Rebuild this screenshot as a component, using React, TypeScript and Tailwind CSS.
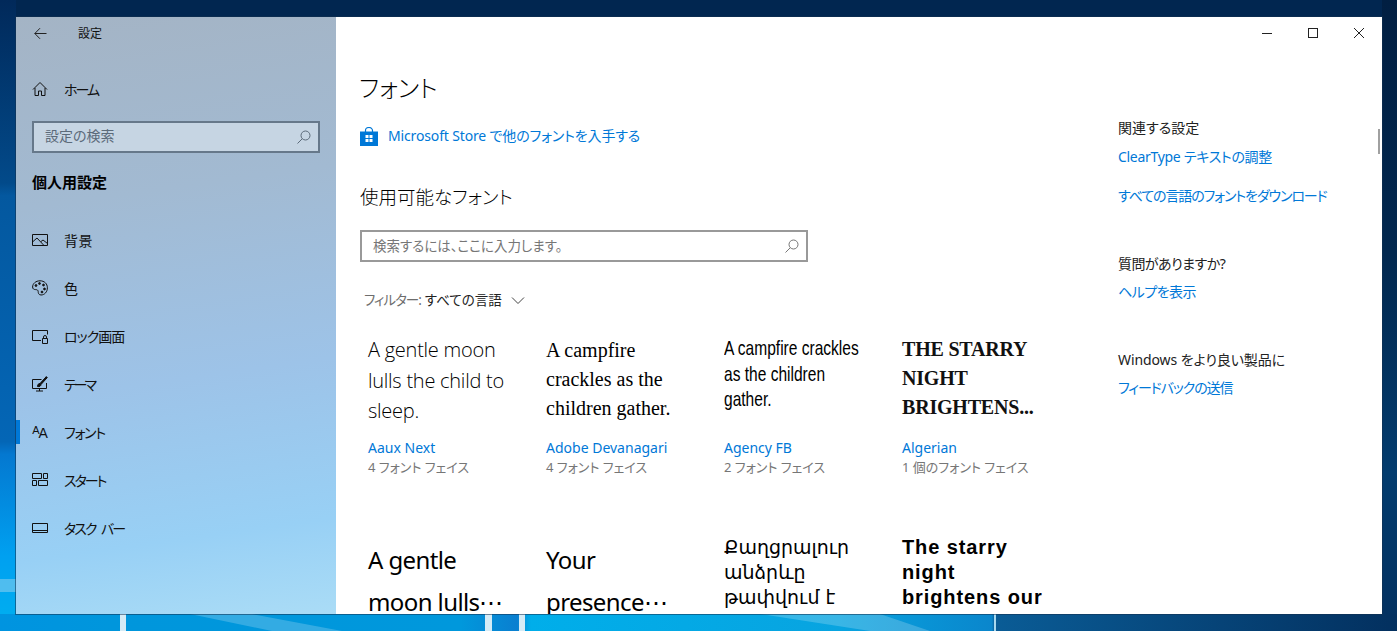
import React from 'react';

const BlackStroke = { fill: 'none', stroke: 'currentColor', strokeWidth: 1 };

const Wallpaper = () => (
  <svg className="absolute inset-0" width="1397" height="631" viewBox="0 0 1397 631">
    <defs>
      <linearGradient id="left" x1="0" y1="0" x2="0" y2="1">
        <stop offset="0" stopColor="#01295a" />
        <stop offset="0.29" stopColor="#024a8a" />
        <stop offset="0.31" stopColor="#04589f" />
        <stop offset="0.7" stopColor="#0466b6" />
        <stop offset="0.72" stopColor="#0478d0" />
        <stop offset="0.88" stopColor="#00a0f0" />
        <stop offset="1" stopColor="#00b0f0" />
      </linearGradient>
      <linearGradient id="bottom" x1="0" y1="0" x2="1" y2="0">
        <stop offset="0" stopColor="#0094e0" />
        <stop offset="0.08" stopColor="#0096dc" />
        <stop offset="0.33" stopColor="#0098dc" />
        <stop offset="0.37" stopColor="#0a7fd0" />
        <stop offset="0.38" stopColor="#00aeea" />
        <stop offset="0.6" stopColor="#08a4e0" />
        <stop offset="0.71" stopColor="#0a86cc" />
        <stop offset="0.712" stopColor="#0a5c96" />
        <stop offset="1" stopColor="#03305f" />
      </linearGradient>
      <linearGradient id="right" x1="0" y1="0" x2="0" y2="1">
        <stop offset="0" stopColor="#011f42" />
        <stop offset="0.4" stopColor="#02284f" />
        <stop offset="0.75" stopColor="#033c6e" />
        <stop offset="1" stopColor="#03305f" />
      </linearGradient>
    </defs>
    <rect x="0" y="0" width="1397" height="17" fill="#012650" />
    <rect x="1382" y="0" width="15" height="631" fill="url(#right)" />
    <rect x="0" y="0" width="16" height="631" fill="url(#left)" />
    <rect x="0" y="579" width="16" height="13" fill="#8fd0ee" opacity="0.55" />
    <rect x="0" y="614" width="1397" height="17" fill="url(#bottom)" />
    <path d="M190 614h62l90 17h-70zM760 614h120l50 17h-60z" fill="#fff" opacity="0.2" />
    <path d="M120 614h6v17h-6zM485 614h7v17h-7zM519 614h6v17h-6z" fill="#d5ebf6" />
    <path d="M994 614h2v17h-2z" fill="#a8d8ee" />
  </svg>
);

const SearchIcon = () => (
  <svg width="16" height="16" viewBox="0 0 16 16" {...BlackStroke}>
    <circle cx="9.5" cy="6.5" r="4.5" />
    <path d="M6.3 9.7 1.500 14.500" />
  </svg>
);

const HomeIcon = () => (
  <svg width="16" height="16" viewBox="0 0 16 16" {...BlackStroke}>
    <path d="M1 8.500 8 1.500l7 7" />
    <path d="M3 7v7.500h3.500V10h3v4.500H13V7" />
  </svg>
);

const ImageIcon = () => (
  <svg width="16" height="16" viewBox="0 0 16 16" {...BlackStroke}>
    <path d="M.5 2.500h15v11H.5z" />
    <path d="M.5 10 5 6l7 7.500M9 9.500l2-1.500 4.500 3.500" />
  </svg>
);

const PaletteIcon = () => (
  <svg width="16" height="16" viewBox="0 0 16 16" {...BlackStroke}>
    <path d="M8 .8C3.800.8.6 3.600.6 7c0 2 1.600 2.600 3 2.600 1.500 0 2.600.6 2.600 2 0 1 .3 3.400 2.800 3.400 3.600 0 6.400-3.200 6.400-7.200S12.400.8 8 .8z" />
    <circle cx="4" cy="5.500" r=".9" fill="currentColor" />
    <circle cx="7.500" cy="3.500" r=".9" fill="currentColor" />
    <circle cx="11.500" cy="5" r=".9" fill="currentColor" />
    <circle cx="12.500" cy="9" r=".9" fill="currentColor" />
    <circle cx="10" cy="12" r=".9" fill="currentColor" />
  </svg>
);

const LockScreenIcon = () => (
  <svg width="16" height="16" viewBox="0 0 16 16" {...BlackStroke}>
    <path d="M9 12.500H.5v-10h15v4" />
    <path d="M10.500 10.500h5v5h-5zM11.500 10.500V9a1.500 1.500 0 0 1 3 0v1.500" />
  </svg>
);

const ThemeIcon = () => (
  <svg width="16" height="16" viewBox="0 0 16 16" {...BlackStroke}>
    <path d="M14.500 7v5.500H.5v-9h9" />
    <path d="M7.500 12.500v2.500M4 15h7" />
    <path d="M5.500 10.500c0-2 1-3 2.500-3L14.300.6l1 1L9 8.500c0 1.500-1.500 2.500-3.500 2z" fill="currentColor" />
  </svg>
);

const StartIcon = () => (
  <svg width="16" height="16" viewBox="0 0 16 16" {...BlackStroke}>
    <path d="M.5 1.500h9v5h-9zM11.500 1.500h4v5h-4zM.5 8.500h4v5h-4zM6.500 8.500h9v5h-9z" />
  </svg>
);

const TaskbarIcon = () => (
  <svg width="16" height="16" viewBox="0 0 16 16" {...BlackStroke}>
    <path d="M.5 3.500h15v9H.5z" />
    <path d="M.5 10.500h15" />
  </svg>
);

const FontIcon = () => (
  <span className="flex w-4 items-end justify-center font-['Liberation_Sans',sans-serif] leading-none text-[#111]">
    <span className="mb-[4px] text-[11px]">A</span>
    <span className="-ml-[1px] text-[14px]">A</span>
  </span>
);

const StoreIcon = () => (
  <svg width="18" height="19" viewBox="0 0 18 19">
    <path d="M5.500 5V3.500a3.500 3 0 0 1 7 0V5" fill="none" stroke="#0078d7" strokeWidth="1.200" />
    <path d="M0 4.500h18V19H0z" fill="#0078d7" />
    <path d="M5.500 8h3v3h-3zM9.500 8h3v3h-3zM5.500 12h3v3h-3zM9.500 12h3v3h-3z" fill="#fff" />
  </svg>
);

const navItems = [
  { label: '背景', icon: <ImageIcon />, tracking: 'tracking-[0.5px]' },
  { label: '色', icon: <PaletteIcon />, tracking: '' },
  { label: 'ロック画面', icon: <LockScreenIcon />, tracking: 'tracking-[-1px]' },
  { label: 'テーマ', icon: <ThemeIcon />, tracking: 'tracking-[-3px]' },
  { label: 'フォント', icon: <FontIcon />, tracking: 'tracking-[-1.25px]', active: true },
  { label: 'スタート', icon: <StartIcon />, tracking: 'tracking-[-2px]' },
  { label: 'タスク バー', icon: <TaskbarIcon />, tracking: 'tracking-[-2px] [word-spacing:4px]' },
];

const Sidebar = () => (
  <aside className="flex h-full w-[320px] shrink-0 flex-col bg-[linear-gradient(172deg,#a4b4c5_0%,#a2bad2_30%,#9dc3e8_60%,#98d0f5_85%,#aadcf6_100%)] text-[14px] text-[#111]">
    <div className="flex h-8 items-center pl-[18px]">
      <svg width="13" height="13" viewBox="0 0 13 13" fill="none" stroke="#222" strokeWidth="1">
        <path d="M12.500 6.500H.8M6 1.200.8 6.500 6 11.800" />
      </svg>
      <span className="ml-[31px] pt-[1px] text-[12px]">設定</span>
    </div>
    <div className="mt-[16px] flex h-12 items-center gap-4 pl-4">
      <HomeIcon />
      <span className="tracking-[-2px]">ホーム</span>
    </div>
    <div className="mx-4 mt-[8px] flex h-8 items-center justify-between border-2 border-[#66788a] bg-[#c6d5e3] pl-[11px] pr-[6px] text-[#5c6b7a]">
      <span className="mb-[3px]">設定の検索</span>
      <SearchIcon />
    </div>
    <div className="mt-[19px] pl-4 text-[15px] font-semibold leading-5 text-black">個人用設定</div>
    <nav className="mt-[24px] flex flex-col">
      {navItems.map((item) => (
        <div key={item.label} className="relative flex h-12 items-center gap-4 pl-4">
          {item.active && <span className="absolute left-0 top-3 h-6 w-1 bg-[#0078d7]" />}
          {item.icon}
          <span className={item.tracking}>{item.label}</span>
        </div>
      ))}
    </nav>
  </aside>
);

const fontCards = [
  {
    sample: <p className="text-[20px] leading-[30.500px] font-['Open_Sans','Noto_Sans',sans-serif] font-light tracking-[-0.25px] text-black">A gentle moon lulls the child to sleep.</p>,
    name: 'Aaux Next',
    faces: '4 フォント フェイス',
  },
  {
    sample: <p className="pt-[1px] text-[20px] leading-[29px] font-['Liberation_Serif',serif] text-black">A campfire crackles as the children gather.</p>,
    name: 'Adobe Devanagari',
    faces: '4 フォント フェイス',
  },
  {
    sample: (
      <p className="w-[200px] origin-left scale-x-[0.74] text-[21px] leading-[25.500px] font-['Liberation_Sans',sans-serif] text-black">
        A campfire crackles<br />as the children<br />gather.
      </p>
    ),
    name: 'Agency FB',
    faces: '2 フォント フェイス',
  },
  {
    sample: <p className="text-[20px] leading-[29px] font-['Liberation_Serif',serif] font-bold tracking-[-0.2px] text-[#111]">THE STARRY NIGHT BRIGHTENS...</p>,
    name: 'Algerian',
    faces: '1 個のフォント フェイス',
  },
  {
    sample: <p className="-mt-[7px] text-[24px] leading-[42px] font-['Noto_Sans',sans-serif] tracking-[-0.6px] text-black">A gentle moon lulls⋯</p>,
    name: '',
    faces: '',
  },
  {
    sample: <p className="-mt-[7px] text-[24px] leading-[42px] font-['Noto_Sans',sans-serif] tracking-[-0.6px] text-black">Your presence⋯</p>,
    name: '',
    faces: '',
  },
  {
    sample: <p className="-mt-[11px] text-[19px] leading-[25px] font-['DejaVu_Sans',sans-serif] text-black">Քաղցրալուր անձրևը թափվում է տանիքին</p>,
    name: '',
    faces: '',
  },
  {
    sample: (
      <p className="-mt-[11px] whitespace-nowrap text-[20px] leading-[25px] font-['Liberation_Sans',sans-serif] font-bold tracking-[0.9px] text-black">
        The starry<br />night<br />brightens our<br />dark
      </p>
    ),
    name: '',
    faces: '',
  },
];

const RelatedLink = ({ children, className }: { children: React.ReactNode; className?: string }) => (
  <a className={`block text-[14px] leading-5 text-[#0078d7] ${className ?? ''}`}>{children}</a>
);

const RightColumn = () => (
  <div className="w-[240px] shrink-0 pt-[101px] text-[14px] leading-5 text-[#222]">
    <p>関連する設定</p>
    <RelatedLink className="mt-[9px] tracking-[-0.3px]">ClearType テキストの調整</RelatedLink>
    <RelatedLink className="mt-[19px] tracking-[-1.1px]">すべての言語のフォントをダウンロード</RelatedLink>
    <p className="mt-[48px] tracking-[-0.55px]">質問がありますか?</p>
    <RelatedLink className="mt-[8px] tracking-[-0.5px]">ヘルプを表示</RelatedLink>
    <p className="mt-[48px] tracking-[-0.1px]">Windows をより良い製品に</p>
    <RelatedLink className="mt-[8px] tracking-[-1.1px]">フィードバックの送信</RelatedLink>
  </div>
);

const MainPane = () => (
  <main className="relative flex h-full min-w-0 flex-1 overflow-hidden bg-white">
    <div className="w-[782px] shrink-0 pl-[24px]">
      <h1 className="-ml-[1px] mt-[53px] text-[24px] font-light leading-[36px] text-black">フォント</h1>
      <a className="mt-[20px] flex items-center gap-[10px] text-[14px] leading-5 tracking-[-0.15px] text-[#0078d7]">
        <StoreIcon />
        <span>Microsoft Store で他のフォントを入手する</span>
      </a>
      <h2 className="mt-[37px] text-[18.500px] font-light leading-[28px] text-black">使用可能なフォント</h2>
      <div className="mt-[19px] flex h-8 w-[448px] items-center justify-between border-2 border-[#999] pl-[11px] pr-[6px] text-[13.500px] text-[#767676]">
        <span>検索するには、ここに入力します。</span>
        <SearchIcon />
      </div>
      <div className="ml-[4px] mt-[28px] flex h-5 items-center text-[13.500px] text-[#222]">
        <span className="tracking-[-1px] text-[#6d6d6d]">フィルター:</span>
        <span className="ml-[4px]">すべての言語</span>
        <svg className="ml-[9px]" width="14" height="14" viewBox="0 0 14 14" fill="none" stroke="#444" strokeWidth="1">
          <path d="M1 4.500 7 10.500l6-6" />
        </svg>
      </div>
      <div className="mt-[25px] grid w-[712px] grid-cols-4">
        {fontCards.map((card, i) => (
          <div key={i} className="h-[211px] pl-[8px] pr-[30px]">
            <div className="h-[103px] overflow-visible">{card.sample}</div>
            {card.name && (
              <>
                <div className="text-[14px] leading-5 text-[#0078d7]">{card.name}</div>
                <div className="text-[13px] leading-[19px] text-[#767676]">{card.faces}</div>
              </>
            )}
          </div>
        ))}
      </div>
    </div>
    <RightColumn />
    <span className="absolute right-[110px] top-[16px] h-px w-[10px] bg-[#222]" />
    <span className="absolute right-[64px] top-[11px] h-[10px] w-[10px] border border-[#222]" />
    <svg className="absolute right-[17px] top-[10px]" width="12" height="12" viewBox="0 0 12 12" stroke="#222" strokeWidth="1">
      <path d="M1 1l10 10M11 1 1 11" />
    </svg>
    <span className="absolute right-[2px] top-[112px] h-[25px] w-[2px] bg-[#a0a0a0]" />
  </main>
);

export default function App() {
  return (
    <div className="relative h-[631px] w-[1397px] overflow-hidden bg-[#012650] pl-[16px] pt-[17px] font-['Noto_Sans','Noto_Sans_CJK_JP',sans-serif] [font-feature-settings:'palt']">
      <Wallpaper />
      <div className="relative flex h-[597px] w-[1366px] shadow-[0_0_0_1px_rgba(20,50,80,0.55)]">
        <Sidebar />
        <MainPane />
      </div>
    </div>
  );
}
